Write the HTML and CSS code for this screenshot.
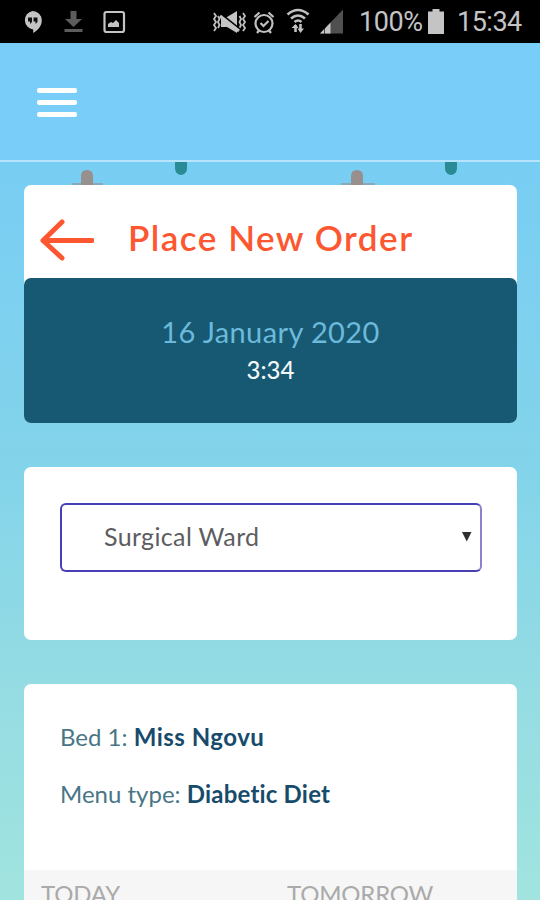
FILE: index.html
```
<!DOCTYPE html>
<html lang="en">
<head>
<meta charset="utf-8">
<title>Place New Order</title>
<link rel="stylesheet" href="styles.css">
</head>
<body>
<div class="screen">
  <div class="statusbar">
    <svg class="status-icons" width="350" height="43" viewBox="0 0 350 43" aria-hidden="true">
      <path fill="#c4c4c4" d="M32.500 11a9.300 9.300 0 0 1 9.300 9.500c0 5.500-4.300 10-8.600 12.500v-3.600a9.300 9.300 0 0 1-.7-18.400z"/>
      <path fill="#111" d="M28 17.500h4v4.500l-2 2v-2.500h-2zM33.500 17.500h4v4.500l-2 2v-2.500h-2z"/>
      <path fill="#5c5c5c" d="M70.500 11h6v8h5.500l-8.500 8-8.500-8h5.500zM64.500 29h18v3h-18z"/>
      <rect x="104.500" y="12" width="19.500" height="20" rx="2" fill="none" stroke="#c4c4c4" stroke-width="2.200"/>
      <path fill="#c4c4c4" d="M108 27v-3l3-2 2 1 3-3 3 3v4z"/>
      <g fill="none" stroke="#c0c0c0">
        <path stroke-width="1.800" d="M214 13l2 3-2 3 2 3-2 3 2 3-2 3M218 16l1.500 3-1.500 3 1.500 3-1.500 3M243 13l2 3-2 3 2 3-2 3 2 3-2 3M239.500 16l1.500 3-1.500 3 1.500 3-1.500 3"/>
        <circle cx="264" cy="23.500" r="8.500" stroke-width="2.200"/>
        <path stroke-width="2.200" d="M260.500 23l3 3 5-5M254.500 17l5-4.500M268.500 12.500l5 4.500M259 30.500l-2 2.500M269 30.500l2 2.500"/>
        <path stroke-width="2.600" d="M287.500 14.500q10.500-9 21 0M291 18.500q7-6 14 0M294.500 22q3.500-3 7 0"/>
        <path stroke-width="2.600" d="M295.500 32v-7M300.500 24v6"/>
      </g>
      <path fill="#c4c4c4" d="M221 17h6l10-6v22l-10-6h-6z"/>
      <path fill="#c4c4c4" d="M291.500 28l4-4 3 4zM297.500 28.500h6.500l-3.500 4.500z"/>
      <path stroke="#000" stroke-width="2" d="M221 14l20 16"/>
      <path stroke="#c4c4c4" stroke-width="3" d="M220 16l19 15"/>
      <path fill="#505050" d="M320 33.500l23-24v24z"/>
      <path fill="#c4c4c4" d="M320 33.500l4-4.200v4.200zM325 33.500v-5l5.500-6v11z"/>
    </svg>
    <span class="percent">100%</span>
    <svg class="battery" width="18" height="25" viewBox="0 0 18 25" aria-hidden="true"><path fill="#c4c4c4" d="M1 2.500h4.500V0h7v2.500H17V25H1z"/></svg>
    <span class="clock">15:34</span>
  </div>
  <header class="navbar">
    <div class="menu"><i></i><i></i><i></i></div>
  </header>
  <main class="content">
    <svg class="backdrop" width="540" height="23" viewBox="0 0 540 23" aria-hidden="true">
      <g fill="#988f8f">
        <path d="M81 23V14q0-6 6-6t6 6v9zM351 23V14q0-6 6-6t6 6v9z"/>
        <path d="M72 21h31v2H72zM341 21h34v2h-34z" opacity=".6"/>
      </g>
      <path fill="#298b94" d="M175 0h12v6q0 6-6 7-6-1-6-7zM445 0h12v6q0 6-6 7-6-1-6-7z"/>
    </svg>
    <section class="card order">
      <div class="heading">
        <svg width="54" height="44" viewBox="0 0 54 44" aria-hidden="true"><path fill="none" stroke="#fc5730" stroke-width="5" stroke-linecap="round" stroke-linejoin="round" d="M22 4L3 22.500 22 40M3 22.500h49"/></svg>
        <h1>Place New Order</h1>
      </div>
      <div class="date">
        <div class="day">16 January 2020</div>
        <div class="time">3:34</div>
      </div>
    </section>
    <section class="card ward">
      <div class="select"><span>Surgical Ward</span><svg width="10" height="10" viewBox="0 0 10 10" aria-hidden="true"><path fill="#303033" d="M0 0h9.500L4.750 9.500z"/></svg></div>
    </section>
    <section class="card patient">
      <div class="details">
        <p>Bed 1: <b class="name">Miss Ngovu</b></p>
        <p>Menu type: <b class="diet">Diabetic Diet</b></p>
      </div>
      <div class="tabs"><span>TODAY</span><span>TOMORROW</span></div>
    </section>
  </main>
</div>
</body>
</html>
```
FILE: styles.css
```
* { box-sizing: border-box; }
body { margin: 0; font-family: Lato, "Liberation Sans", sans-serif; font-variant-ligatures: none; }
.screen { width: 540px; height: 900px; overflow: hidden; display: flex; flex-direction: column; }
.statusbar { height: 43px; flex: none; background: #000; color: #c4c4c4; display: flex; align-items: center; font: 27px/43px Roboto, sans-serif; white-space: nowrap; }
.status-icons { flex: none; }
.percent { width: 77px; padding: 2px 0 0 9px; letter-spacing: -.4px; }
.battery { flex: none; }
.clock { padding: 2px 0 0 12px; letter-spacing: -.5px; }
.navbar { height: 119px; flex: none; background: #78cdf9; border-bottom: 2px solid #b5e4fc; padding: 45px 37px; }
.menu { width: 40px; display: grid; gap: 7px; }
.menu i { height: 5px; border-radius: 2px; background: #fff; }
.content { flex: 1; min-height: 0; background: linear-gradient(#78cdf3 0, #83d4ea 42%, #95dce3 72%, #a1e4df 100%); }
.backdrop { display: block; }
.card { width: 493px; margin-left: 24px; background: #fff; border-radius: 7px; }
.order { height: 238px; }
.heading { height: 93px; padding: 33px 0 0 16px; display: flex; }
.heading svg { flex: none; }
h1 { margin: -2px 0 0 34px; font-size: 35px; line-height: 42px; font-weight: 600; color: #fc5730; letter-spacing: 1.5px; white-space: nowrap; }
.date { height: 145px; padding-top: 36px; background: #175872; border-radius: 7px; text-align: center; }
.day { font-size: 29px; line-height: 36px; color: #6cbadb; letter-spacing: .4px; }
.time { font-size: 24px; line-height: 40px; color: #f2f7fa; font-weight: 500; }
.ward { height: 173px; margin-top: 44px; padding: 36px; }
.select { width: 422px; height: 69px; border: 2px solid #493fb5; border-right-color: #8d80cf; border-radius: 6px; display: flex; align-items: center; justify-content: space-between; padding: 0 8px 2px 42px; font-size: 25px; color: #5d5d61; letter-spacing: .35px; }
.select span { margin-top: -2px; }
.patient { height: 230px; margin-top: 44px; overflow: hidden; }
.details { height: 186px; padding: 24px 36px; font-size: 24px; color: #497686; }
p { margin: 0; line-height: 57px; white-space: nowrap; }
b { color: #174b6b; font-weight: 700; }
.name { letter-spacing: .5px; }
.diet { letter-spacing: .2px; }
.tabs { height: 45px; background: #f6f6f6; display: grid; grid-template-columns: 246px 247px; padding: 9px 17px; font-size: 24px; line-height: 30px; letter-spacing: -.2px; color: #aaa; }
```
